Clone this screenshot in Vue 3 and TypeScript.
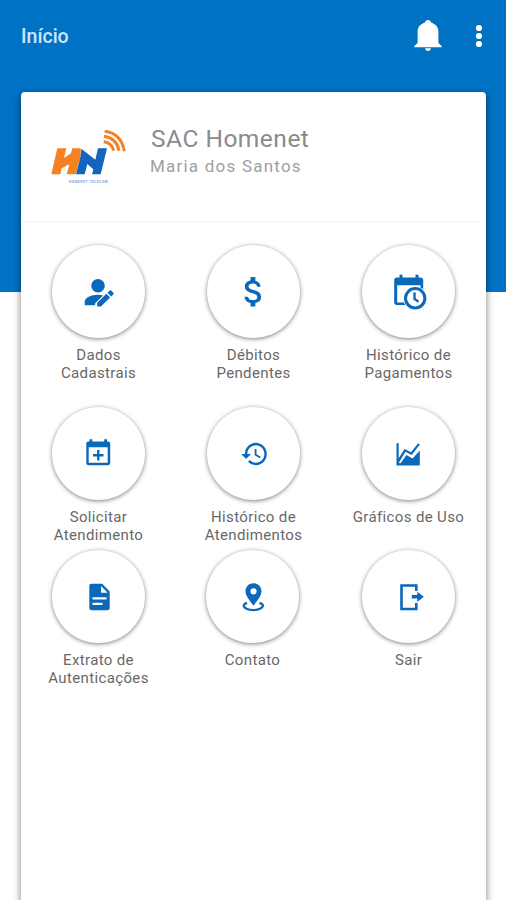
<script setup lang="ts">
type IconName =
  | 'person' | 'money' | 'payments' | 'request' | 'history'
  | 'chart' | 'document' | 'pin' | 'exit'

interface Action {
  icon: IconName
  lines: string[]
}

const rows: Action[][] = [
  [
    { icon: 'person', lines: ['Dados', 'Cadastrais'] },
    { icon: 'money', lines: ['Débitos', 'Pendentes'] },
    { icon: 'payments', lines: ['Histórico de', 'Pagamentos'] },
  ],
  [
    { icon: 'request', lines: ['Solicitar', 'Atendimento'] },
    { icon: 'history', lines: ['Histórico de', 'Atendimentos'] },
    { icon: 'chart', lines: ['Gráficos de Uso'] },
  ],
  [
    { icon: 'document', lines: ['Extrato de', 'Autenticações'] },
    { icon: 'pin', lines: ['Contato'] },
    { icon: 'exit', lines: ['Sair'] },
  ],
]
</script>

<template>
  <div class="screen">
    <header class="bar">
      <h1 class="bar-title">Início</h1>
      <svg class="bell" viewBox="0 0 28 32" aria-hidden="true">
        <path d="M14 0c-1.600 0-2.700 1-3 2.600C6.600 4 3.600 7.200 3.600 11.500V23L.4 26v1.200h27.200V26L24.400 23V11.500c0-4.300-3-7.500-7.400-8.900C16.700 1 15.600 0 14 0zM11 28.300c.3 1.600 1.500 2.700 3 2.700s2.700-1.100 3-2.700z" />
      </svg>
      <svg class="dots" viewBox="0 0 8 24" aria-hidden="true">
        <circle cx="4" cy="4" r="3.100" />
        <circle cx="4" cy="12" r="3.100" />
        <circle cx="4" cy="20" r="3.100" />
      </svg>
    </header>

    <main class="card">
      <section class="profile">
        <svg class="logo" viewBox="0 0 300 225" aria-hidden="true">
          <path class="orange" d="M52 85H79L72 114L93 100L97 85H122V108L107 163H80L88 133L65 145L61 163H34z" />
          <path class="navy" d="M124 86L166 119L174 85H201L182 163H156L160 148L142 132L134 163H108L122 108z" />
          <g class="waves">
            <path d="M191 65Q216 68 221 92" />
            <path d="M192 49Q230 55 237 92" />
            <path d="M194 34Q244 40 253 94" />
          </g>
          <text class="logo-caption" x="86" y="188" textLength="117">HOMENET TELECOM</text>
        </svg>
        <div class="who">
          <h2 class="company">SAC Homenet</h2>
          <p class="client">Maria dos Santos</p>
        </div>
      </section>

      <nav class="actions">
        <div v-for="(row, r) in rows" :key="r" class="row">
          <div v-for="action in row" :key="action.icon" class="action" :class="action.icon">
            <button class="circle" type="button">
              <svg class="icon" viewBox="-.5 -.5 41 41" aria-hidden="true">
                <template v-if="action.icon === 'person'">
                  <circle cx="19.500" cy="14.200" r="6.800" />
                  <path d="M6.200 33.800v-3.500c0-4 6.500-7 13-7 2 0 3.800.3 5.400.8L16.500 32v1.800z" />
                  <path d="M18.700 34.900v-3.700l9.200-9 3.700 3.700-9.200 9zM29 21.200l2-2c.6-.6 1.300-.6 1.900 0l1.800 1.800c.6.6.6 1.300 0 1.900l-2 2z" />
                </template>
                <path
                  v-else-if="action.icon === 'money'"
                  transform="translate(.7 .7) scale(1.630)"
                  d="M11.800 10.900c-2.270-.59-3-1.200-3-2.150 0-1.090 1.010-1.850 2.700-1.850 1.780 0 2.440.85 2.500 2.100h2.210c-.07-1.720-1.120-3.300-3.210-3.810V3h-3v2.160c-1.940.42-3.500 1.680-3.500 3.610 0 2.310 1.910 3.460 4.700 4.130 2.500.6 3 1.480 3 2.410 0 .69-.49 1.790-2.700 1.790-2.060 0-2.870-.92-2.980-2.100h-2.200c.12 2.190 1.760 3.420 3.680 3.830V21h3v-2.150c1.950-.37 3.500-1.500 3.500-3.550 0-2.840-2.430-3.810-4.700-4.400z"
                />
                <template v-else-if="action.icon === 'payments'">
                  <path fill-rule="evenodd" d="M8.200 6H11V3.200h3V6h13V3.200h3V6h2c1.600 0 2.700 1 2.700 2.500V33.500H8.200c-1.500 0-2.500-1-2.500-2.500V8.500C5.700 7 6.700 6 8.200 6zM8.700 13.800V31H32V13.800z" />
                  <circle class="blank" cx="26.700" cy="26.800" r="12" />
                  <circle class="line" cx="26.700" cy="26.800" r="9.700" stroke-width="3" />
                  <path class="line" d="M26 21v6.400l4 2.800" stroke-width="2.400" />
                </template>
                <template v-else-if="action.icon === 'request'">
                  <path fill-rule="evenodd" d="M10 8H11V5.700h2.800V8h11.900V5.700h2.800V8h1c1.300 0 2.200.9 2.200 2.200V29.500c0 1.300-.9 2.200-2.200 2.200H10c-1.300 0-2.200-.9-2.200-2.200V10.200C7.800 8.900 8.700 8 10 8zM10.200 13.800V29.300H29.200V13.800z" />
                  <path class="line" d="M14.500 21.800h10.500M19.750 16.500v10.500" stroke-width="2.400" />
                </template>
                <path
                  v-else-if="action.icon === 'history'"
                  transform="translate(6.500 5.400) scale(1.220 1.250)"
                  d="M13 3c-4.970 0-9 4.030-9 9H1l3.890 3.890.07.14L9 12H6c0-3.870 3.130-7 7-7s7 3.130 7 7-3.130 7-7 7c-1.930 0-3.680-.79-4.940-2.060l-1.420 1.420C8.270 19.990 10.510 21 13 21c4.970 0 9-4.030 9-9s-4.030-9-9-9zm-1 5v5l4.280 2.540.72-1.210-3.500-2.080V8H12z"
                />
                <path
                  v-else-if="action.icon === 'chart'"
                  d="M8 9.800h2.200v15L16 15.500l6.500 3.200 7.200-9 1.600 1.200-8.100 10.600-6.300-3.200L10.200 29.500l2 .2 5.700-8.200 6.200 3.600 7.200-8V32H8z"
                />
                <path
                  v-else-if="action.icon === 'document'"
                  fill-rule="evenodd"
                  d="M13 7.300H23.700L31.200 15V31.500c0 1.300-.9 2.200-2.200 2.200H13c-1.300 0-2.200-.9-2.200-2.200V9.500c0-1.300.9-2.200 2.200-2.200zM22.500 9.500V16.300H29.200zM14 20.800V23H28V20.800zM14 26.300V28.500H24V26.300z"
                />
                <template v-else-if="action.icon === 'pin'">
                  <path fill-rule="evenodd" d="M21 6.700c4.500 0 8 3.500 8 8 0 5-4.800 9.700-8 14.600-3.200-4.900-8-9.600-8-14.600 0-4.500 3.500-8 8-8zM21 11.700a3.100 3.100 0 1 0 0 6.200 3.100 3.100 0 0 0 0-6.200z" />
                  <path class="line" d="M14.500 26.300c-2.200.8-3.300 1.700-3.300 2.800 0 2.500 4.300 4.500 9.600 4.500s9.600-2 9.600-4.500c0-1.100-1.100-2-3.300-2.800" stroke-width="2.300" />
                </template>
                <template v-else>
                  <path class="line" d="M27.800 14.500V9H13v23.500H27.800V26.500" stroke-width="2.600" />
                  <path d="M23.300 18.600h5.500v-3.400l6.500 5.100-6.500 5.100V22h-5.500z" />
                </template>
              </svg>
            </button>
            <p class="label">
              <span v-for="line in action.lines" :key="line">{{ line }}</span>
            </p>
          </div>
        </div>
      </nav>
    </main>
  </div>
</template>

<style>
body {
  margin: 0;
}
</style>

<style scoped>
.screen {
  box-sizing: border-box;
  height: 900px;
  overflow: hidden;
  display: flex;
  flex-direction: column;
  font-family: Roboto, "Liberation Sans", sans-serif;
  background: linear-gradient(#0072c4 292px, #fff 292px);
}
h1, h2, p {
  margin: 0;
  font-weight: 400;
}
.bar {
  box-sizing: border-box;
  height: 92px;
  flex: none;
  display: flex;
  align-items: flex-start;
  padding: 20px 23px 0 21px;
}
.bar-title {
  flex: 1;
  padding-top: 1px;
  font-size: 19.500px;
  font-weight: 500;
  line-height: 32px;
  color: #cfe4f7;
}
.bell {
  width: 28px;
  height: 32px;
  margin-right: 33px;
  fill: #fff;
}
.dots {
  width: 8px;
  height: 24px;
  margin-top: 4px;
  fill: #fff;
}
.card {
  flex: 1;
  margin: 0 20px 0 21px;
  border-radius: 4px 4px 0 0;
  background: #fff;
  box-shadow: 0 3px 7px 1px rgba(0, 0, 0, .42);
}
.profile {
  box-sizing: border-box;
  height: 130px;
  margin-right: 5px;
  display: flex;
  padding: 28px 0 0 19px;
  border-bottom: 1px solid #f2f2f2;
}
.logo {
  width: 100px;
  height: 75px;
}
.orange {
  fill: #f58220;
}
.navy {
  fill: #1264bd;
}
.waves {
  fill: none;
  stroke: #f58220;
  stroke-width: 9;
}
.logo-caption {
  font-size: 10px;
  font-weight: 700;
  fill: #6fa9df;
}
.who {
  padding: 2px 0 0 10px;
}
.company {
  padding: 1px 0 0 1px;
  font-size: 24.500px;
  line-height: 31px;
  letter-spacing: .5px;
  color: #8b8b8b;
}
.client {
  font-size: 17px;
  line-height: 24px;
  letter-spacing: 1.220px;
  color: #a0a0a0;
}
.actions {
  padding-top: 23px;
}
.row {
  display: grid;
  grid-template-columns: repeat(3, 155px);
  height: 143px;
}
.row:first-child {
  height: 162px;
}
.action {
  display: flex;
  flex-direction: column;
  align-items: center;
}
.action.pin {
  padding-right: 2px;
}
.circle {
  box-sizing: border-box;
  width: 93px;
  height: 93px;
  display: grid;
  place-items: center;
  padding: 0;
  border: 0;
  border-radius: 50%;
  background: #fff;
  box-shadow: 0 1px 4px rgba(0, 0, 0, .5);
}
.icon {
  width: 41px;
  height: 41px;
  fill: #0b68ba;
}
.line {
  fill: none;
  stroke: #0b68ba;
}
.blank {
  fill: #fff;
}
.label {
  margin-top: 8px;
  display: flex;
  flex-direction: column;
  align-items: center;
  font-size: 15px;
  line-height: 18px;
  letter-spacing: .36px;
  white-space: nowrap;
  color: #686868;
}
</style>
